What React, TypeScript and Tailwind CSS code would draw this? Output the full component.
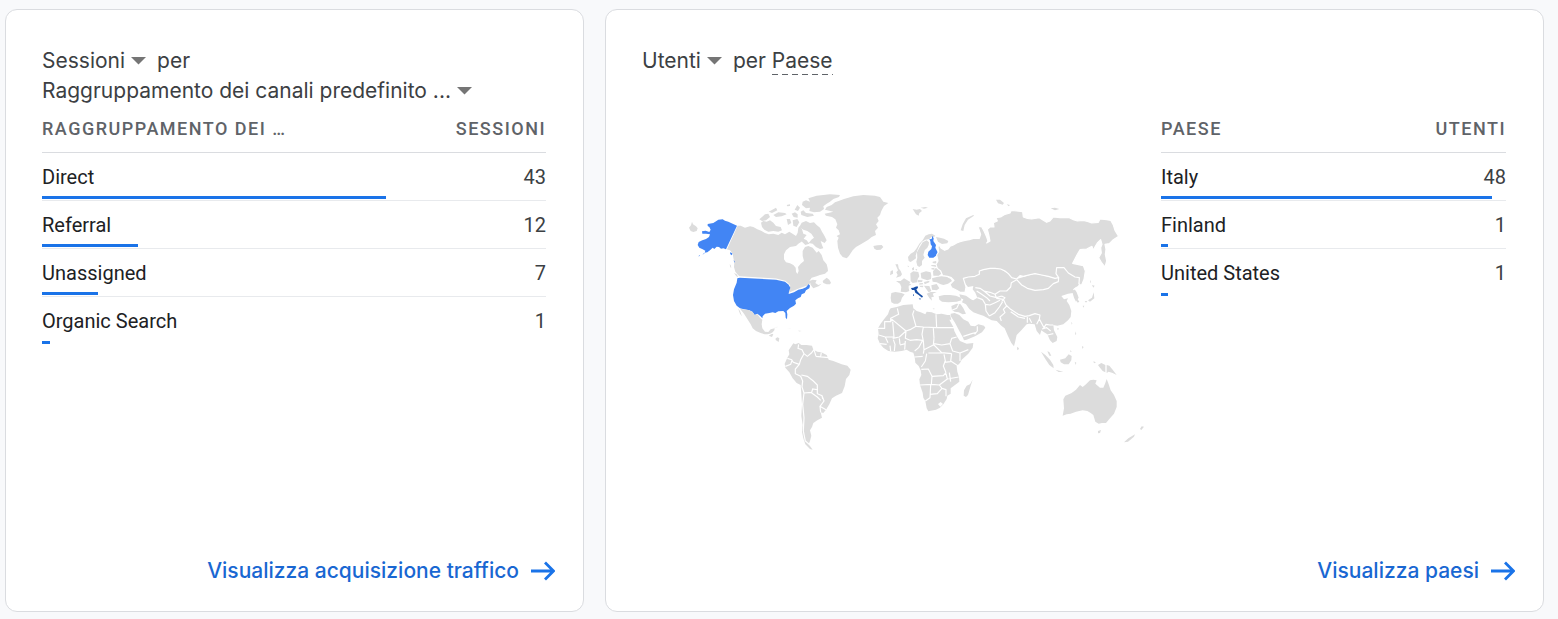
type Row = { label: string; value: number };

const channels: Row[] = [
  { label: "Direct", value: 43 },
  { label: "Referral", value: 12 },
  { label: "Unassigned", value: 7 },
  { label: "Organic Search", value: 1 },
];

const countries: Row[] = [
  { label: "Italy", value: 48 },
  { label: "Finland", value: 1 },
  { label: "United States", value: 1 },
];

function Caret() {
  return (
    <svg className="h-2 w-4 shrink-0" viewBox="0 0 16 8" aria-hidden="true">
      <path d="M0 0h15L7.500 7.500z" fill="#757575" />
    </svg>
  );
}

function ReportTable({ dimension, metric, rows }: { dimension: string; metric: string; rows: Row[] }) {
  const total = rows.reduce((sum, row) => sum + row.value, 0);
  return (
    <table className="w-full border-collapse font-[Roboto,sans-serif]">
      <thead>
        <tr className="h-[46px] border-b border-[#dadce0] text-lg font-medium tracking-[1.5px] text-[#5f6368]">
          <th scope="col" className="text-left font-medium">{dimension}</th>
          <th scope="col" className="text-right font-medium">{metric}</th>
        </tr>
      </thead>
      <tbody>
        {rows.map((row) => (
          <tr key={row.label} className="relative h-12 border-b border-[#e8eaed] text-xl text-[#3c4043] last:border-b-0">
            <th scope="row" className="pt-[2px] text-left font-normal text-[#202124]">
              {row.label}
              <span
                className="absolute bottom-0 left-0 h-[3px] bg-[#1a73e8]"
                style={{ width: `${(row.value / total) * 100}%` }}
              />
            </th>
            <td className="pt-[2px] text-right">{row.value}</td>
          </tr>
        ))}
      </tbody>
    </table>
  );
}

function CardLink({ children }: { children: string }) {
  return (
    <div className="mt-auto flex justify-end pr-7">
      <a href="#report" className="flex items-center gap-3 text-[21px] leading-8 font-medium text-[#1967d2]">
        {children}
        <svg className="h-5 w-6" viewBox="0 0 24 20" fill="none" stroke="#1a73e8" strokeWidth="2.800" aria-hidden="true">
          <path d="M0 10h22M14 1.500l8.500 8.500L14 18.500" />
        </svg>
      </a>
    </div>
  );
}

function WorldMap() {
  return (
    <svg className="mt-px w-full" viewBox="0 0 519 430" fill="#dcdcdc" role="img" aria-label="Utenti per Paese">
      {/* North America */}
      <g transform="translate(28 74) scale(.33333)">
        <path d="M66 122L69 130 78 136 83 142 80 150 70 153 62 150 57 140 63 133Z" />
        <path d="M201 134L212 134 225 140 240 136 250 138 262 145 275 150 285 156 296 160 310 158 325 162 335 155 345 160 358 152 370 160 378 165 383 155 385 140 390 135 396 145 400 158 410 162 402 172 398 180 385 188 378 195 360 198 348 208 342 220 342 235 348 244 360 247 370 252 377 260 378 272 382 279 386 270 384 258 392 248 402 240 398 225 398 210 405 198 415 195 428 200 440 215 446 210 455 222 460 238 470 250 473 262 474 270 465 278 450 282 440 286 425 290 418 300 428 296 440 298 436 306 445 312 455 308 446 316 430 322 425 316 420 308 412 314 398 320 385 325 358 336 355 328 360 315 350 303 340 300 318 295 210 287 204 282 196 272 192 258 193 245 190 230 188 218 180 208 170 205Z" />
        <path d="M458 300L470 290 478 296 483 305 480 310 470 310 460 306ZM192 276l8 4 5 9-6-3zM179 250l3 2 2 8-3-1z" />
        <path d="M273 125L280 120 290 122 300 118 310 125 318 135 332 138 336 148 325 152 310 150 295 152 283 146 276 138ZM268 115L285 100 295 98 300 108 288 118 276 120ZM296 92L318 80 322 88 306 96ZM310 102L325 94 345 96 350 100 335 106 318 108ZM365 98l10-4 8 6v10l-12-2zM392 92l8-4 8 8 20 2 4 6-20 4-18-6zM350 72l10-2v5l-8 1zM382 72l8 8-6 10-10-4zM368 118l14-4 6 10-8 14-10-4zM350 114h10l4 12-10 6z" />
        <path d="M415 52L440 44 480 40 510 42 507 48 490 54 480 62 470 68 460 76 462 84 450 92 432 94 418 90 420 80 408 82 396 72 398 62 408 58 420 62Z" />
        <path d="M395 125L408 120 420 126 432 124 440 132 450 140 456 152 462 162 470 178 464 186 452 180 456 192 460 202 450 204 438 198 428 188 416 186 424 176 432 170 424 158 412 150 400 146 388 138ZM398 172l12 6 8 10-12 4-10-10z" />
        <path fill="none" stroke="#fff" strokeWidth="3" d="M202 133L169 206M204 287L318 294 346 301 359 312 356 337 386 324 412 315 421 308" />
        <g fill="#4285f4">
          <path d="M113 129L130 126 145 116 158 115 165 119 175 122 201 134 168 205 160 202 153 203 147 198 140 197 133 204 128 200 120 208 112 214 104 215 106 209 98 205 88 200 83 192 86 183 97 178 108 174 117 168 120 160 108 158 97 158 96 151 107 149 118 153 122 146 118 138 113 135ZM84 226l6-3v2zM97 220l6-3v2zM180 214l7 3-1 6-5-3zM191 238l3 3-1 5z" />
          <path d="M210 290L318 296 345 302 356 311 361 320 357 332 356 339 372 334 385 326 398 323 408 319 416 309 420 314 418 322 408 328 404 336 395 340 392 348 384 352 376 358 378 368 372 374 360 381 350 390 352 400 351 415 347 410 346 396 340 390 325 391 316 396 308 394 298 396 285 398 278 406 277 412 270 404 262 398 254 402 247 392 238 388 222 385 210 382 200 374 192 360 189 342 192 325 200 305 202 292Z" />
        </g>
      </g>

      {/* Central and South America */}
      <g transform="translate(88 194) scale(.33333)">
        <path d="M30 23L38 25 56 27 68 33 74 42 82 40 90 50 97 56 95 70 97 82 105 92 115 93 122 85 134 82 133 88 128 94 120 98 112 100 104 100 92 96 78 90 68 82 62 70 52 54 42 38ZM24 22l6 8 6 16-6-8zM116 104l10-6 4 2-4 8zM137 112l6-3 5 3-2 11-9-6z" />
        <path d="M130 80l12-3v2zM170 80l12 3v1zM205 88l10 2-8 2z" opacity=".5" />
        <path d="M190 127L196 130 206 126 214 132 230 132 246 134 250 146 262 152 274 154 290 162 296 176 310 180 335 190 352 194 362 206 358 222 348 234 344 256 336 276 318 284 306 292 298 310 288 326 280 336 272 334 276 350 262 358 250 366 246 378 240 388 244 404 240 420 236 430 242 438 248 446 240 444 226 430 220 412 216 392 218 372 214 345 216 310 214 280 212 252 200 246 188 232 178 214 166 200 164 188 172 170 178 160 176 148 184 136Z" />
        <path fill="none" stroke="#fff" strokeWidth="3.500" d="M206 130L204 142 216 146 222 158 212 176 208 190M222 158L232 166 244 156 252 146M252 146L258 166M274 154L272 166M258 166L296 170M172 172L185 176 190 184 208 190M166 196L182 190 186 178M208 190L196 204 196 218 212 226M214 222L232 226 250 240 262 252 262 266M212 226L218 240 216 258 222 276M222 276L245 274 248 264 262 266 262 278 276 284 278 294M245 276L262 288 272 298M276 284L282 300 270 316L288 326M270 316L272 334M222 276L218 310 222 350 220 390 226 420 240 432" />
      </g>

      {/* Greenland and Europe */}
      <g transform="translate(178 74) scale(.33333)">
        <path d="M20 78L35 72 45 64 56 60 72 54 85 50 100 46 130 42 165 44 180 48 190 62 205 66 192 75 184 90 180 102 172 110 176 120 168 130 174 140 165 150 168 162 155 168 145 176 125 188 108 198 98 208 86 226 80 232 68 228 60 218 54 200 52 180 56 170 50 165 60 160 56 148 48 140 52 130 46 115 36 108 18 104 14 98 28 95 40 92 15 86Z" />
        <path d="M160 195L172 193 185 192 190 198 182 206 170 207 163 203ZM278 84L290 86 300 84 306 90 298 96 296 104 288 100ZM302 80l14-2 8 2-12 3z" />
        <path d="M266 240L264 228 272 218 282 212 290 202 298 188 308 178 316 164 326 160 336 158 346 164 342 168 334 168 328 174 316 176 306 182 298 194 292 208 287 224 288 232 282 236 272 243Z" />
        <path d="M320 178L327 184 326 192 322 200 314 208 310 222 314 230 306 240 306 252 298 258 292 254 289 242 292 230 291 214 298 200 308 184Z" />
        <path d="M226 250L234 250 236 262 242 270 246 280 242 286 228 290 233 282 229 274 234 268ZM212 270l7-2v10l-9 5zM228 300L242 300 252 292 262 298 271 303 266 312 266 322 268 330 258 334 242 332 244 318 240 308Z" />
        <path d="M214 336L226 333 244 336 254 340 246 350 242 362 234 368 222 368 214 364 212 350ZM271 277L280 271 295 273 298 286 293 294 292 304 278 306 272 300ZM302 276L318 271 332 274 334 284 333 294 322 298 304 292Z" />
        <path d="M276 262l6-4v9l-5 1zM286 264l6 1-3 4zM338 242l10-2 3 8-13-2zM334 252l16 0v6l-16-3zM334 262l10-2-2 6-8-1zM339 271L347 261 358 263 364 278 356 284 340 284ZM336 292L350 288 364 286 378 286 392 294 396 300 384 308 370 312 362 310 350 304 338 302ZM334 313L350 309 358 322 350 328 336 326Z" />
        <path d="M294 297l14 1-2 5-12 1zM298 307l10-1 2 4-12 1zM312 303l16-4v5l-14 6zM262 254l5 1-2 4zM260 310l10-2 4 3-10 4zM312 314l16 1 6 15-8 4-9-12zM298 314l12 0-1 5-8-1zM320 338l12-5 18 0-12 5 4 9-8 2 2 10-8-8zM338 382l8 2-6 1z" />
        <path d="M356 346L372 342 390 342 408 344 422 350 424 358 410 362 385 364 366 362 358 356Z" />
        <path fill="#4285f4" d="M337 164L341 172 340 180 348 192 346 200 351 210 354 217 348 224 340 230 328 230 323 222 325 212 334 204 336 196 332 190 331 180 328 175 335 174Z" />
        <path fill="#174ea6" d="M273 321L280 320 286 317 293 316 294 321 289 325 293 332 300 339 309 346 306 350 296 342 286 335 283 327 276 327ZM296 353l6-1-1 4zM280 340l2 0v5h-2z" />
      </g>

      {/* Asia */}
      <g transform="translate(298 74) scale(.33333)">
        <path d="M68 292L118 280 118 270 150 262 182 264 230 294 285 278 345 292 348 260 372 260 395 282 418 290 416 312 410 318 402 322 410 334 416 350 408 362 402 350 398 336 384 338 364 345 372 355 384 352 380 360 388 372 394 390 392 408 384 418 370 430 352 434 340 432 342 448 352 468 350 480 338 486 330 478 322 460 310 452 304 448 300 462 290 450 284 430 268 428 260 430 244 448 230 462 226 480 222 496 214 486 204 465 194 442 184 434 170 420 155 418 148 414 130 404 116 400 100 394 88 384 78 370 66 364 72 350 100 358 112 350 106 335 98 325 100 315 84 318 76 308 68 300Z" />
        <path stroke="#fff" strokeWidth="3.500" strokeLinejoin="round" d="M-4 190L4 202 14 208 24 204 30 196 40 192 50 186 60 182 75 178 88 176 100 172 118 172 122 160 118 148 114 138 124 136 132 150 140 168 144 180 140 186 150 180 146 160 142 145 150 138 162 138 160 125 172 120 168 110 182 108 195 100 210 96 214 88 230 90 248 92 250 108 262 112 275 114 298 110 310 118 320 124 330 120 340 108 360 110 388 110 400 116 412 120 430 118 445 122 455 126 475 124 480 114 500 116 512 118 520 132 525 148 536 166 520 176 508 188 495 190 498 205 496 220 500 240 495 258 484 244 476 230 484 216 482 200 486 190 482 176 472 186 466 196 460 208 456 196 440 204 420 206 412 220 398 247 412 250 430 254 436 270 432 295 424 314 417 308 418 290 405 288 395 282 385 276 372 260 350 260 348 278 356 290 345 292 325 286 305 282 285 278 265 282 250 286 240 284 230 294 215 290 205 278 195 270 182 264 165 262 150 262 130 266 118 270 118 280 105 286 85 288 70 292 74 305 78 318 75 334 60 334 50 328 35 320 30 310 42 298 34 290 22 286 8 284 2 270-8 262-12 250-6 240-10 222-4 212-6 200Z" />
        <path d="M-12 168L0 170 12 173 25 180 22 187 6 189-6 182ZM62 148L68 130 78 112 100 102 102 104 84 116 74 132 70 150ZM168 56L180 56 192 66 188 71 174 67ZM200 70l10 2-4 4zM332 82L345 80 358 84 345 88Z" />
        <path d="M450 296l3 8-3 1zM456 312l8 2-4 6zM461 334l2 18-13 10-6-4 12-8zM434 360l8 0-4 5zM410 350l8 12-5 3-5-9zM428 374l5 0-3 6z" />
        <path fill="none" stroke="#fff" strokeWidth="3.500" strokeLinejoin="round" d="M106 320L120 322 132 330 150 334 165 340 180 330 200 330 212 318 214 305 230 296M110 330L125 340 140 350 150 360M132 330L150 345 170 350 185 345M165 340L170 352 190 355M185 345L195 350 185 362M136 370L150 372 165 365 180 358M112 350L128 356 136 370L138 390 148 405M148 405L165 395 178 378 188 362M200 375L190 385 195 395 180 408 184 420M190 355L198 372 212 385 235 400 255 406 268 404 285 398 300 402 298 414 290 430M212 392L235 408 255 412M262 408L262 425M268 412L275 425M230 296L245 312 262 322 285 328 310 326 325 322 340 308 355 302 356 290M298 414L304 425 312 440 318 430 330 432 340 432M306 444L320 440 332 450M322 462L340 458M400 326L412 318" />
      </g>

      {/* Africa and Middle East */}
      <g transform="translate(218 144) scale(.33333)">
        <path d="M272 188L284 186 298 192 310 205 325 212 332 224 345 226 355 220 372 224 376 230 366 244 345 256 320 266 312 268 308 258 298 240 285 215 272 195ZM274 165L290 158 302 160 310 172 318 188 308 190 296 184 284 182 276 178ZM298 130L318 134 335 146 332 152 318 148 302 142Z" />
        <path d="M92 172L110 168 130 162 158 160 160 172 170 180 182 184 196 190 200 182 215 184 230 190 245 188 262 192 270 192 274 206 268 206 280 228 283 240 292 258 300 270 320 278 340 276 338 290 325 308 305 326 300 336 290 346 292 362 297 378 298 392 285 402 272 412 272 428 262 434 260 444 250 460 240 470 228 476 205 481 200 472 196 450 190 440 188 425 180 402 178 385 184 372 182 358 176 345 166 335 164 318 160 305 150 302 140 296 125 300 105 302 85 300 70 290 60 278 53 262 56 250 54 232 62 218 72 205 84 190 88 178Z" />
        <path d="M338 386L332 404 324 432 318 438 311 434 312 418 320 404 330 400ZM472 287l5 5-3 6-3-3z" />
        <path fill="#fff" d="M234 459l8-6 7 6-8 8z" />
        <path fill="none" stroke="#fff" strokeWidth="3.500" strokeLinejoin="round" d="M54 232L74 232 74 212 92 212 92 202 116 190 112 172M92 212L96 205 138 240 118 258 98 262M98 212L102 258 76 258 56 252M138 240L150 236 168 226 162 205 158 190 162 178M168 226L190 228 228 230M228 190L230 230 282 230M190 228L186 250 190 270M220 232L222 262M138 240L136 262 150 268 170 266 188 268M118 262L120 280M100 266L105 280 103 300M136 270L134 296M120 282L136 278M90 284L92 300M76 258L84 275M60 278L80 280M188 268L176 290 164 300M190 270L192 296 220 282 222 262M192 296L190 308M222 282L245 305 275 308M222 278L245 282 270 278 275 262 290 258M270 278L278 300 300 306 325 296M300 306L300 330M275 308L272 330 295 345M252 310L256 330 250 345 258 365M272 332L252 334M200 308L196 330 184 348M164 318L188 316M205 306L245 306M184 355L205 354 216 376 250 374 258 365M216 376L214 400 180 402M214 400L238 402 262 384 258 368M212 402L210 440 196 450M210 430L232 428 246 412 238 402M246 412L258 416 258 436M262 384L296 378M268 365L272 392M310 256L335 248 350 244M352 226L352 240 344 250M296 160L290 172 276 178" />
      </g>

      {/* Oceania */}
      <g transform="translate(358 184) scale(.33333)">
        <path d="M188 374L192 352 190 325 196 314 215 306 228 296 240 282 248 288 258 280 270 268 280 266 290 268 286 278 300 290 310 290 316 276 320 264 326 280 332 298 342 312 350 330 350 348 342 368 328 384 318 396 306 396 296 398 286 392 280 372 272 366 262 360 248 358 228 362 212 368 200 370ZM294 420l9-3-3 9-6 1zM420 414l5-8 7 1-8 10zM372 454L385 442 405 430 402 437 384 452Z" />
        <path d="M294 222L304 216 316 222 316 244 308 240 300 230ZM320 222L328 224 338 236 350 252 338 246 326 242 320 246ZM180 206L196 202 206 190 215 195 214 208 206 220 192 220 182 214ZM123 182L136 192 150 206 160 222 161 232 148 222 136 204ZM166 236L178 239 190 242 176 243ZM142 181l6 2 6 11-6 0zM224 212l5 3-2 7zM225 121l4 8-3 3zM246 165l5 3-4 6zM210 178l5 3-3 3zM172 110l5 3-4 5zM280 211l8 3-6 3zM214 92l3 5-2 4z" />
      </g>
    </svg>
  );
}

const cardClass = "flex flex-col rounded-xl border border-[#dadce0] bg-white pt-9 pb-6";

export default function App() {
  return (
    <main className="grid min-h-screen grid-cols-[579fr_939fr] gap-[21px] bg-[#f8f9fb] pt-[9px] pr-[14px] pb-[7px] pl-[5px] font-[Inter,sans-serif] text-[#3c4043]">
      <section className={cardClass}>
        <div className="pr-[37px] pl-9">
          <h2 className="text-[21px] leading-[30px]">
            <span className="flex items-center gap-[10px]">
              <button type="button" className="flex items-center gap-[6px]">
                Sessioni
                <Caret />
              </button>
              per
            </span>
            <button type="button" className="flex items-center gap-[6px]">
              Raggruppamento dei canali predefinito ...
              <Caret />
            </button>
          </h2>
          <ReportTable dimension="RAGGRUPPAMENTO DEI …" metric="SESSIONI" rows={channels} />
        </div>
        <CardLink>Visualizza acquisizione traffico</CardLink>
      </section>

      <section className={cardClass}>
        <div className="pr-[37px] pl-9">
          <h2 className="mb-[30px] flex items-center gap-[10px] text-[21px] leading-[30px]">
            <button type="button" className="flex items-center gap-[6px]">
              Utenti
              <Caret />
            </button>
            <span>
              per{" "}
              <span className="bg-[repeating-linear-gradient(90deg,#5f6368_0_6px,transparent_6px_10px)] bg-[length:100%_1px] bg-bottom bg-no-repeat pb-[2px]">
                Paese
              </span>
            </span>
          </h2>
          <div className="grid grid-cols-[519fr_345fr] items-start">
            <WorldMap />
            <ReportTable dimension="PAESE" metric="UTENTI" rows={countries} />
          </div>
        </div>
        <CardLink>Visualizza paesi</CardLink>
      </section>
    </main>
  );
}
